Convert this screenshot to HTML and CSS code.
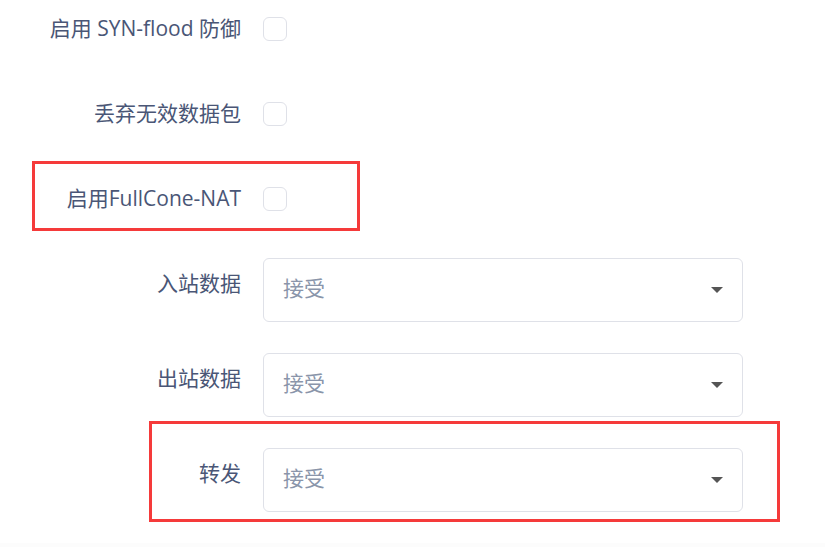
FILE: index.html
```html
<!DOCTYPE html>
<html lang="zh-CN">
<head>
<meta charset="utf-8">
<link rel="stylesheet" href="styles.css">
</head>
<body>
<div class="page">
  <form class="form">
    <div class="row row-check">
      <label class="label">启用 SYN-flood 防御</label>
      <span class="checkbox"></span>
    </div>
    <div class="row row-check">
      <label class="label">丢弃无效数据包</label>
      <span class="checkbox"></span>
    </div>
    <div class="row row-check mark-wrap">
      <label class="label">启用FullCone-NAT</label>
      <span class="checkbox"></span>
      <span class="mark mark-1"></span>
    </div>
    <div class="row row-select">
      <label class="label">入站数据</label>
      <div class="select"><span class="placeholder">接受</span><span class="caret"></span></div>
    </div>
    <div class="row row-select">
      <label class="label">出站数据</label>
      <div class="select"><span class="placeholder">接受</span><span class="caret"></span></div>
    </div>
    <div class="row row-select mark-wrap">
      <label class="label">转发</label>
      <div class="select"><span class="placeholder">接受</span><span class="caret"></span></div>
      <span class="mark mark-2"></span>
    </div>
  </form>
  <div class="footer"></div>
</div>
</body>
</html>
```
FILE: styles.css
```css
* { box-sizing: border-box; }
html, body { margin: 0; padding: 0; background: #fff; }
body {
  font-family: "Open Sans", "Noto Sans CJK SC", sans-serif;
  color: #4a5676;
  width: 825px;
  height: 547px;
  overflow: hidden;
}
.page { display: flex; flex-direction: column; height: 547px; }
.form { display: flex; flex-direction: column; flex: 1; }
.row { display: flex; position: relative; }
.label {
  width: 241px;
  flex: 0 0 241px;
  text-align: right;
  font-size: 21px;
  line-height: 30px;
  white-space: nowrap;
}
.row-check { height: 58px; align-items: center; margin-bottom: 27px; }
.row-check .label { margin-top: -2px; }
.row-check:nth-child(3) { margin-bottom: 30px; }
.checkbox {
  width: 24px;
  height: 24px;
  margin-left: 22px;
  border: 1px solid #dfe1e8;
  border-radius: 6px;
  background: #fff;
}
.row-select { height: 64px; margin-bottom: 31px; }
.row-select .label { padding-top: 10px; }
.select {
  margin-left: 22px;
  width: 480px;
  height: 64px;
  border: 1px solid #dfe1e8;
  border-radius: 6px;
  display: flex;
  align-items: center;
  padding: 0 19px;
  justify-content: space-between;
}
.placeholder { font-size: 21px; line-height: 30px; color: #8a95aa; margin-top: -4px; }
.caret {
  width: 0; height: 0;
  border-left: 6px solid transparent;
  border-right: 6px solid transparent;
  border-top: 6px solid #555;
}
.mark { position: absolute; border: 3px solid #f53a3a; pointer-events: none; }
.mark-1 { left: 32px; top: -9px; width: 328px; height: 70px; }
.mark-2 { left: 149px; top: -27px; width: 631px; height: 101px; }
.footer { height: 10px; background: #fcfcfc; }
```
